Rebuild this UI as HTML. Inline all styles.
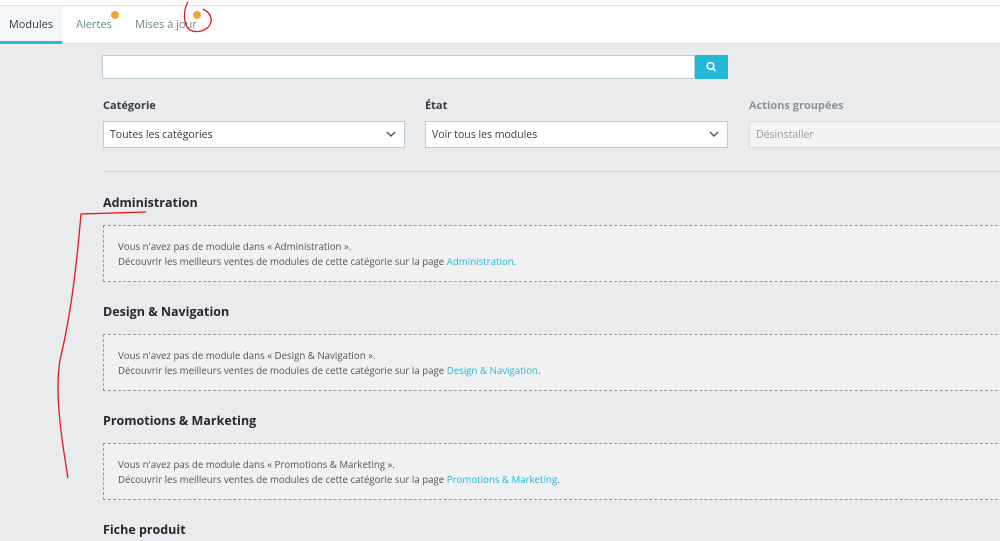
<!DOCTYPE html>
<html><head><meta charset="utf-8"><style>
*{box-sizing:border-box;margin:0;padding:0}
body{width:1000px;height:541px;overflow:hidden;background:#eaebed;font-family:"Open Sans","Liberation Sans",sans-serif;color:#363a41;position:relative}
.top{position:absolute;left:0;top:0;width:1000px;height:6px;background:#fff;border-bottom:1px solid #dfe3e6}
.tabs{position:absolute;left:0;top:6px;width:1000px;height:38px;background:#fff;border-bottom:1px solid #dde1e4}
.tab{position:absolute;top:0;height:38px;line-height:38px;font-size:11px;color:#6c868e}
.tab.act{left:0;width:62px;background:#f4f8fa;color:#363a41;text-align:center;border-bottom:3px solid #25b9d7}
.badge{position:absolute;width:8px;height:8px;border-radius:50%;background:#f0a63c;top:5px}
.search{position:absolute;left:102px;top:55px;width:593px;height:24px;background:#fff;border:1px solid #bbcdd2}
.sbtn{position:absolute;left:695px;top:55px;width:33px;height:24px;background:#25b9d7}
.lbl{position:absolute;top:98px;font-size:11px;font-weight:bold;color:#363a41}
.sel{position:absolute;top:121px;height:27px;background:#fff;border:1px solid #bbcdd2;font-size:10.5px;line-height:26px;padding-left:6px;color:#363a41}
.sel svg{position:absolute;right:8px;top:9px}
.hr{position:absolute;left:103px;top:171px;width:897px;height:1px;background:#d0d8da}
h2{position:absolute;left:103px;font-size:12.5px;font-weight:bold;color:#25282d}
.box{position:absolute;left:103px;width:900px;height:57px;border:1px dashed #999;background:#f0f1f2;font-size:9.7px;line-height:15px;padding:13px 0 0 14px;color:#555}
.box a{color:#25b9d7;text-decoration:none}
</style></head><body>
<div class="top"></div>
<div class="tabs">
<div class="tab act">Modules</div>
<div class="tab" style="left:76px">Alertes</div>
<div class="badge" style="left:111px"></div>
<div class="tab" style="left:135px">Mises à jour</div>
<div class="badge" style="left:193px"></div>
</div>
<div class="search"></div>
<div class="sbtn"><svg width="33" height="24"><circle cx="15.5" cy="11" r="3.3" fill="none" stroke="#fff" stroke-width="1.6"/><line x1="18" y1="13.5" x2="20.5" y2="16" stroke="#fff" stroke-width="1.8"/></svg></div>
<div class="lbl" style="left:103px">Catégorie</div>
<div class="lbl" style="left:425px">État</div>
<div class="lbl" style="left:749px;color:#8a9196">Actions groupées</div>
<div class="sel" style="left:103px;width:302px">Toutes les catégories<svg width="10" height="7"><path d="M1 1l4 4 4-4" fill="none" stroke="#555" stroke-width="1.4"/></svg></div>
<div class="sel" style="left:425px;width:303px">Voir tous les modules<svg width="10" height="7"><path d="M1 1l4 4 4-4" fill="none" stroke="#555" stroke-width="1.4"/></svg></div>
<div class="sel" style="left:749px;width:260px;background:#f3f4f4;color:#999;border-color:#d9dee0">Désinstaller</div>
<div class="hr"></div>
<h2 style="top:194px">Administration</h2>
<div class="box" style="top:225px">Vous n'avez pas de module dans « Administration ».<br>Découvrir les meilleurs ventes de modules de cette catégorie sur la page <a>Administration</a>.</div>
<h2 style="top:303px">Design &amp; Navigation</h2>
<div class="box" style="top:334px">Vous n'avez pas de module dans « Design &amp; Navigation ».<br>Découvrir les meilleurs ventes de modules de cette catégorie sur la page <a>Design &amp; Navigation</a>.</div>
<h2 style="top:412px">Promotions &amp; Marketing</h2>
<div class="box" style="top:443px">Vous n'avez pas de module dans « Promotions &amp; Marketing ».<br>Découvrir les meilleurs ventes de modules de cette catégorie sur la page <a>Promotions &amp; Marketing</a>.</div>
<h2 style="top:521px">Fiche produit</h2>
<svg style="position:absolute;left:0;top:0" width="1000" height="541"><g fill="none" stroke="#e8141c" stroke-width="1.3"><path d="M188 2C184 8 182 24 190 30C198 34 209 30 211 22C212 15 207 11 203 9"/><path d="M146 212L81 214C77 260 72 310 60 360C55 390 60 430 68 478"/></g></svg>
</body></html>
